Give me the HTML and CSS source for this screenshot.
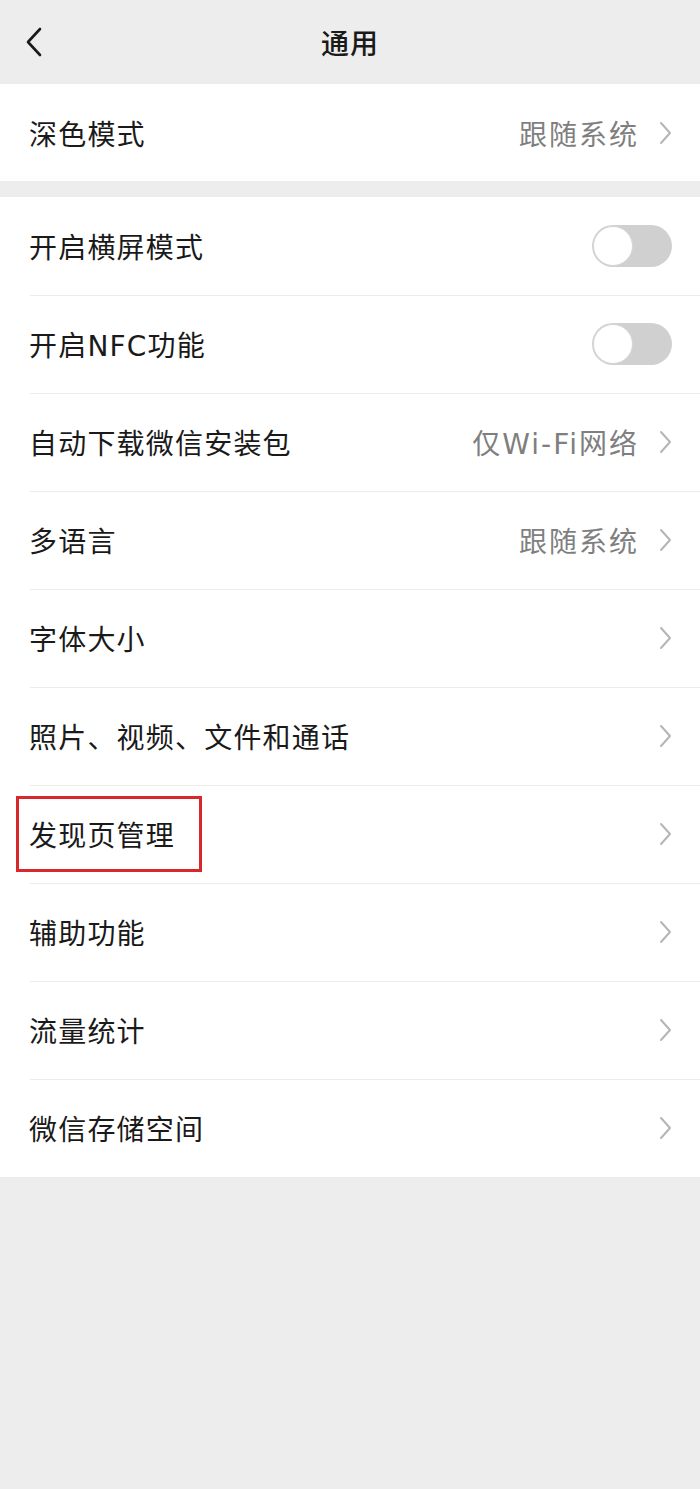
FILE: index.html
```html
<!DOCTYPE html>
<html lang="zh-CN">
<head>
<meta charset="utf-8">
<title>通用</title>
<link rel="stylesheet" href="styles.css">
</head>
<body>
<div class="page">
  <header class="topbar">
    <svg class="back" width="18" height="30" viewBox="0 0 18 30"><path d="M15 2 L3 15 L15 28" fill="none" stroke="#1a1a1a" stroke-width="2.6" stroke-linecap="round" stroke-linejoin="round"/></svg>
    <h1 class="title">通用</h1>
  </header>

  <section class="group group-first">
    <div class="row">
      <span class="label">深色模式</span>
      <span class="value">跟随系统</span>
      <svg class="chev" width="13" height="24" viewBox="0 0 13 24"><path d="M2 2 L11 12 L2 22" fill="none" stroke="#b5b5b5" stroke-width="2" stroke-linecap="round" stroke-linejoin="round"/></svg>
    </div>
  </section>

  <section class="group group-second">
    <div class="row">
      <span class="label">开启横屏模式</span>
      <span class="switch"><span class="knob"></span></span>
    </div>
    <div class="row">
      <span class="label">开启NFC功能</span>
      <span class="switch"><span class="knob"></span></span>
    </div>
    <div class="row">
      <span class="label">自动下载微信安装包</span>
      <span class="value">仅Wi-Fi网络</span>
      <svg class="chev" width="13" height="24" viewBox="0 0 13 24"><path d="M2 2 L11 12 L2 22" fill="none" stroke="#b5b5b5" stroke-width="2" stroke-linecap="round" stroke-linejoin="round"/></svg>
    </div>
    <div class="row">
      <span class="label">多语言</span>
      <span class="value">跟随系统</span>
      <svg class="chev" width="13" height="24" viewBox="0 0 13 24"><path d="M2 2 L11 12 L2 22" fill="none" stroke="#b5b5b5" stroke-width="2" stroke-linecap="round" stroke-linejoin="round"/></svg>
    </div>
    <div class="row">
      <span class="label">字体大小</span>
      <svg class="chev" width="13" height="24" viewBox="0 0 13 24"><path d="M2 2 L11 12 L2 22" fill="none" stroke="#b5b5b5" stroke-width="2" stroke-linecap="round" stroke-linejoin="round"/></svg>
    </div>
    <div class="row">
      <span class="label">照片、视频、文件和通话</span>
      <svg class="chev" width="13" height="24" viewBox="0 0 13 24"><path d="M2 2 L11 12 L2 22" fill="none" stroke="#b5b5b5" stroke-width="2" stroke-linecap="round" stroke-linejoin="round"/></svg>
    </div>
    <div class="row row-marked">
      <span class="label">发现页管理</span>
      <span class="highlight"></span>
      <svg class="chev" width="13" height="24" viewBox="0 0 13 24"><path d="M2 2 L11 12 L2 22" fill="none" stroke="#b5b5b5" stroke-width="2" stroke-linecap="round" stroke-linejoin="round"/></svg>
    </div>
    <div class="row">
      <span class="label">辅助功能</span>
      <svg class="chev" width="13" height="24" viewBox="0 0 13 24"><path d="M2 2 L11 12 L2 22" fill="none" stroke="#b5b5b5" stroke-width="2" stroke-linecap="round" stroke-linejoin="round"/></svg>
    </div>
    <div class="row">
      <span class="label">流量统计</span>
      <svg class="chev" width="13" height="24" viewBox="0 0 13 24"><path d="M2 2 L11 12 L2 22" fill="none" stroke="#b5b5b5" stroke-width="2" stroke-linecap="round" stroke-linejoin="round"/></svg>
    </div>
    <div class="row">
      <span class="label">微信存储空间</span>
      <svg class="chev" width="13" height="24" viewBox="0 0 13 24"><path d="M2 2 L11 12 L2 22" fill="none" stroke="#b5b5b5" stroke-width="2" stroke-linecap="round" stroke-linejoin="round"/></svg>
    </div>
  </section>
</div>
</body>
</html>
```

FILE: styles.css
```css
* { box-sizing: border-box; }
html, body {
  margin: 0;
  padding: 0;
  background: #ededed;
}
body {
  font-family: "DejaVu Sans", "Noto Sans CJK SC", sans-serif;
  color: #1a1a1a;
}
.page {
  width: 700px;
  min-height: 1489px;
  background: #ededed;
}
.topbar {
  height: 84px;
  display: flex;
  align-items: center;
  justify-content: center;
  position: relative;
  background: #ededed;
}
.back {
  position: absolute;
  left: 25px;
  top: 27px;
}
.title {
  margin: 0;
  font-size: 28px;
  font-weight: 500;
  font-family: "Noto Sans CJK SC", sans-serif;
  letter-spacing: 1px;
  line-height: 1;
}
.group {
  background: #ffffff;
}
.group-first {
  margin-bottom: 16px;
}
.row {
  height: 98px;
  display: flex;
  align-items: center;
  padding: 0 30px 0 29px;
  position: relative;
}
.group-first .row { height: 97px; }
.row + .row::before {
  content: "";
  position: absolute;
  left: 30px;
  right: 0;
  top: 0;
  height: 1px;
  background: #ececec;
}
.label {
  font-size: 28px;
  flex: 1;
  line-height: 1;
  padding-top: 6px;
  letter-spacing: 1.2px;
}
.value {
  font-size: 28px;
  color: #7f7f7f;
  line-height: 1;
  padding-top: 6px;
  margin-right: 20px;
  letter-spacing: 2px;
}
.chev {
  flex: none;
  margin-right: -2px;
}
.switch {
  width: 80px;
  height: 42px;
  border-radius: 21px;
  background: #d0d0d0;
  position: relative;
  margin-right: -2px;
  flex: none;
}
.knob {
  position: absolute;
  left: 1px;
  top: 1px;
  width: 40px;
  height: 40px;
  border-radius: 50%;
  background: #ffffff;
  border: 1.5px solid #d6d6d6;
}
.highlight {
  position: absolute;
  left: 16px;
  top: 11px;
  width: 186px;
  height: 76px;
  border: 3px solid #d8282c;
  pointer-events: none;
}
```
